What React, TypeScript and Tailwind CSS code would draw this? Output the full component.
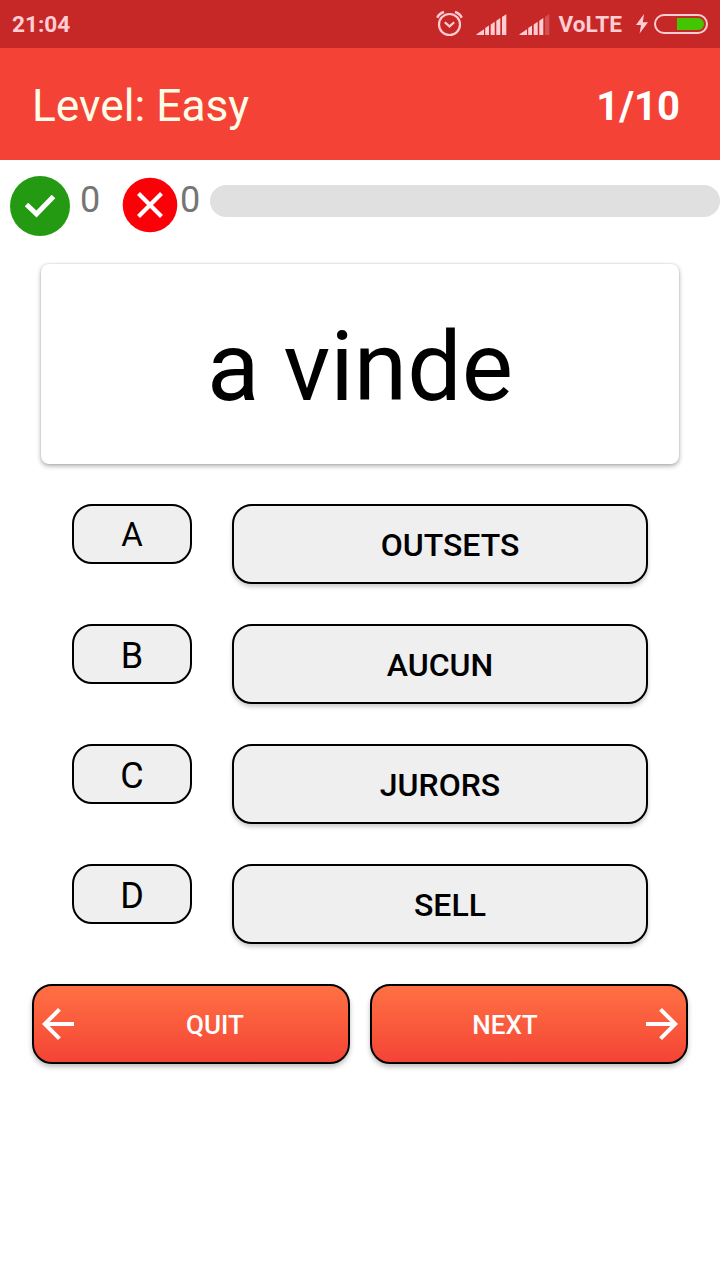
// Quiz screen — one vocabulary question with four possible answers
import clsx from 'clsx';

interface Answer {
  letter: string;
  text: string;
  centered?: boolean;
}

const ANSWERS: Answer[] = [
  { letter: 'A', text: 'OUTSETS' },
  { letter: 'B', text: 'AUCUN', centered: true },
  { letter: 'C', text: 'JURORS', centered: true },
  { letter: 'D', text: 'SELL' },
];

function AlarmIcon() {
  return (
    <svg className="mb-0.5 h-7 w-7" viewBox="0 0 28 28" fill="none" stroke="currentColor" strokeWidth="2.2">
      <circle cx="14.5" cy="15.5" r="10.5" />
      <path d="M9.8 13.2l4.7 4.2 4.7-4.2" />
      <path d="M2.3 8.8Q4 4.5 9 3M26.7 8.8Q25 4.5 20 3" strokeWidth="2.5" />
    </svg>
  );
}

function SignalIcon({ weak }: { weak?: boolean }) {
  return (
    <svg className="mt-px h-[21px] w-[31px]" viewBox="0 0 31 21" fill="currentColor">
      <path d="M0.5 21v-0.8L8 15.3V21zM9.2 14v7H13v-9.5zM14.7 10.4V21h4V7.8zM20.3 6.8V21h4V4.1z" />
      <path d="M26 3V21h4.3V0.2z" opacity={weak ? 0.25 : 1} />
    </svg>
  );
}

function StatusBar() {
  return (
    <div className="flex h-12 items-center bg-[#c62828] px-3 text-[#ffcdd2]">
      <span className="pt-[3px] text-[22.6px] font-bold leading-none">21:04</span>
      <div className="ml-auto flex items-center">
        <AlarmIcon />
        <div className="ml-[13px] flex gap-[12px]">
          <SignalIcon />
          <SignalIcon weak />
        </div>
        <span className="ml-[9px] pt-[3px] text-[22.6px] font-bold leading-none">VoLTE</span>
        <svg className="ml-[14px] h-5 w-3" viewBox="0 0 12 20" fill="currentColor">
          <path d="M8 0L0 11h5L3.6 19.5 12 8.3H6.8z" />
        </svg>
        <div className="ml-[6px] flex h-5 w-[54px] justify-end rounded-full border-2 border-[#ffcdd2] p-0.5">
          <div className="w-[27px] rounded-r-full bg-[#43c600]" />
        </div>
      </div>
    </div>
  );
}

function ScoreBar() {
  return (
    <div className="flex h-[76px] pl-2.5 pt-4 text-[36px] leading-[49px] text-[#757575]">
      <svg className="h-15 w-15" viewBox="0 0 60 60">
        <circle cx="30" cy="30" r="30" fill="#249a12" />
        <path d="M16.5 28.5l10 9.5L43.5 20.5" fill="none" stroke="#fff" strokeWidth="5" />
      </svg>
      <span className="ml-2.5 w-10">0</span>
      <svg className="h-15 w-15" viewBox="0 0 60 60">
        <circle cx="30" cy="29" r="27.3" fill="#fb0007" />
        <path d="M18.5 17.5l23 23M41.5 17.5l-23 23" stroke="#fff" strokeWidth="4.2" />
      </svg>
      <span className="w-[30px]">0</span>
      <div className="mt-[9px] h-8 flex-1 rounded-full bg-[#e0e0e0]" />
    </div>
  );
}

function AnswerRow({ letter, text, centered }: Answer) {
  return (
    <div className="flex h-20 items-start gap-10">
      <div
        className={clsx(
          'flex h-15 w-30 items-center justify-center rounded-[20px] border-2 border-black bg-[#efefef] leading-none',
          letter === 'A' ? 'pt-px text-[33px]' : 'pt-[3px] text-[36px]',
        )}
      >
        {letter}
      </div>
      <button
        className={clsx(
          'flex h-20 flex-1 items-center justify-center rounded-[20px] border-2 border-black bg-[#efefef] pt-0.5 text-[32px] font-medium leading-none shadow-[0_3px_4px_rgba(0,0,0,0.2)]',
          !centered && 'pl-5',
        )}
      >
        {text}
      </button>
    </div>
  );
}

function NavButton({ label, forward }: { label: string; forward?: boolean }) {
  return (
    <button
      className={clsx(
        'flex h-20 flex-1 items-center rounded-[20px] border-2 border-black bg-linear-to-b from-[#ff7043] to-[#f44336] text-[26px] font-medium leading-none text-white shadow-[0_3px_5px_rgba(0,0,0,0.25)]',
        forward && 'flex-row-reverse',
      )}
    >
      <svg className="h-12 w-12" viewBox="0 0 24 24" fill="currentColor">
        {forward ? (
          <path d="M12 4l-1.41 1.41L16.17 11H4v2h12.17l-5.58 5.59L12 20l8-8z" />
        ) : (
          <path d="M20 11H7.83l5.59-5.59L12 4l-8 8 8 8 1.41-1.41L7.83 13H20v-2z" />
        )}
      </svg>
      <span className="flex-1 pt-0.5 text-center">{label}</span>
    </button>
  );
}

export default function App() {
  return (
    <div className="flex h-[1280px] w-[720px] flex-col bg-white font-[Roboto,sans-serif] text-black">
      <StatusBar />

      <header className="flex h-28 items-center justify-between bg-[#f44336] pl-8 pr-10 pt-1 leading-none">
        <h1 className="text-[44.3px] text-[#fffde7]">Level: Easy</h1>
        <span className="pt-0.5 text-[40px] font-bold text-white">1/10</span>
      </header>

      <ScoreBar />

      <div className="mx-[41px] mt-7 flex h-[200px] items-center justify-center rounded-lg bg-white pt-1.5 text-[96.6px] leading-none shadow-[0_2px_5px_rgba(0,0,0,0.32),0_0_2px_rgba(0,0,0,0.15)]">
        a vinde
      </div>

      <div className="mx-18 mt-10 flex flex-col gap-10">
        {ANSWERS.map((a) => (
          <AnswerRow key={a.letter} {...a} />
        ))}
      </div>

      <div className="mx-8 mt-10 flex gap-5">
        <NavButton label="QUIT" />
        <NavButton label="NEXT" forward />
      </div>
    </div>
  );
}
